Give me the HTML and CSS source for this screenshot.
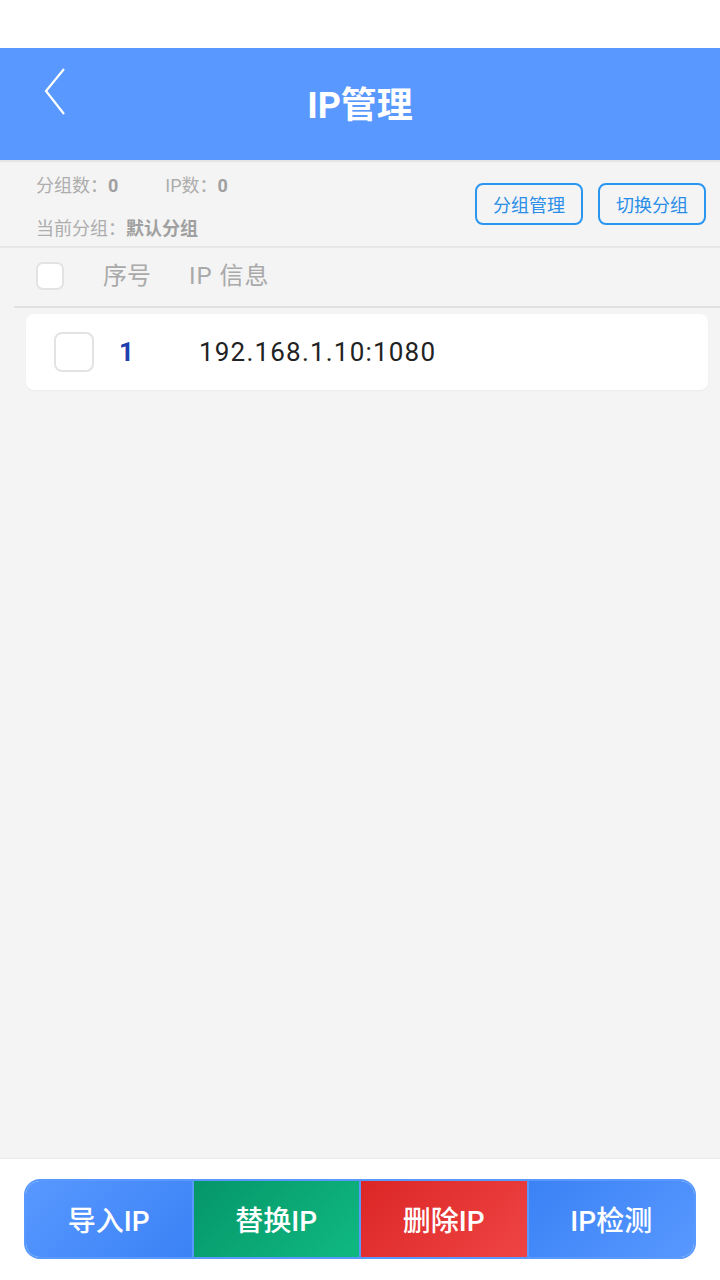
FILE: index.html
```html
<!DOCTYPE html>
<html lang="zh-CN">
<head>
  <meta charset="UTF-8" />
  <meta name="viewport" content="width=device-width, initial-scale=1.0"/>
  <title>IP管理</title>
  <link rel="stylesheet" href="styles.css">
</head>
<body>

<div class="app">
  <div class="status-bar"></div>

  <div class="header">
    <span class="back">
      <svg width="24" height="48" viewBox="0 0 24 48">
        <polyline points="21,1 3,23 21,46" fill="none" stroke="#fff" stroke-width="2.2"/>
      </svg>
    </span>
    <h1>IP管理</h1>
  </div>

  <div class="info">
    <div class="stats">
      <div class="stat-line">
        <span class="stat">分组数：<b>0</b></span>
        <span class="stat">IP数：<b>0</b></span>
      </div>
      <div class="stat-line">
        <span class="stat">当前分组：<b>默认分组</b></span>
      </div>
    </div>
    <div class="actions">
      <button class="outline-btn">分组管理</button>
      <button class="outline-btn">切换分组</button>
    </div>
  </div>

  <div class="list-head">
    <span class="check small"></span>
    <span class="col-no">序号</span>
    <span class="col-ip">IP 信息</span>
  </div>

  <div class="list">
    <div class="row">
      <span class="check"></span>
      <span class="row-no">1</span>
      <span class="row-ip">192.168.1.10:1080</span>
    </div>
  </div>

  <div class="footer">
    <div class="btn-group">
      <button class="seg seg-import">导入IP</button>
      <button class="seg seg-replace">替换IP</button>
      <button class="seg seg-delete">删除IP</button>
      <button class="seg seg-check">IP检测</button>
    </div>
  </div>
</div>

</body>
</html>
```

FILE: styles.css
```css
body {
  margin: 0;
  font-family: Roboto, "Noto Sans CJK SC", sans-serif;
  background: #f4f4f4;
}
.app {
  height: 1280px;
  display: flex;
  flex-direction: column;
}
.status-bar {
  height: 48px;
  background: #fff;
}
.header {
  height: 112px;
  background: #5898ff;
  display: flex;
  align-items: center;
  justify-content: center;
  position: relative;
  box-shadow: 0 2px 1px #e6e6e6;
}
.header .back {
  position: absolute;
  left: 43px;
  top: 20px;
}
.header h1 {
  margin: 0 0 4px 0;
  color: #fff;
  font-size: 36px;
  font-weight: bold;
}
.info {
  display: flex;
  justify-content: space-between;
  padding: 2px 14px 0 36px;
  height: 88px;
  box-sizing: border-box;
  border-bottom: 2px solid #e6e6e6;
}
.stat-line {
  height: 43px;
  display: flex;
  align-items: center;
  gap: 47px;
}
.stat {
  font-size: 18px;
  color: #adadad;
}
.stat b {
  color: #a0a0a0;
}
.actions {
  display: flex;
  gap: 15px;
  padding-top: 21px;
}
.outline-btn {
  width: 108px;
  height: 42px;
  border: 2px solid #2a96f0;
  border-radius: 8px;
  background: transparent;
  color: #2a8ee8;
  font-family: inherit;
  font-size: 18px;
  padding: 0;
}
.list-head {
  display: flex;
  align-items: center;
  height: 60px;
  box-sizing: border-box;
  margin-left: 14px;
  padding: 0 0 3px 22px;
  border-bottom: 2px solid #e2e2e2;
}
.check {
  display: block;
  width: 36px;
  height: 36px;
  border: 2px solid #e3e3e3;
  border-radius: 8px;
  background: #fff;
  flex: none;
}
.check.small {
  width: 24px;
  height: 24px;
  border-radius: 7px;
}
.col-no,
.col-ip {
  font-size: 24px;
  color: #a9a9a9;
  line-height: 1;
}
.col-no {
  margin-left: 39px;
}
.col-ip {
  margin-left: 38px;
  letter-spacing: 1px;
}
.list {
  flex: 1;
  padding: 6px 12px 0 26px;
}
.row {
  display: flex;
  align-items: center;
  height: 76px;
  background: #fff;
  border-radius: 8px;
  padding-left: 28px;
  box-shadow: 0 1px 2px rgba(0,0,0,0.04);
}
.row-no {
  width: 105px;
  padding-left: 25px;
  box-sizing: border-box;
  color: #1e40af;
  font-size: 26px;
  font-weight: bold;
}
.row-ip {
  color: #222;
  font-size: 26px;
  letter-spacing: 1.2px;
}
.footer {
  height: 122px;
  background: #fff;
  border-top: 1px solid #ebebeb;
  padding: 20px 24px 0 24px;
  box-sizing: border-box;
}
.btn-group {
  display: flex;
  height: 80px;
  border: 2px solid #5898ff;
  border-radius: 16px;
  overflow: hidden;
  box-sizing: border-box;
}
.seg {
  flex: 1;
  border: none;
  margin: 0;
  padding: 0;
  color: #fff;
  font-family: inherit;
  font-size: 28px;
  font-weight: 500;
}
.seg + .seg {
  border-left: 2px solid #5898ff;
}
.seg-import {
  background: linear-gradient(135deg, #5898ff, #3b82f6);
}
.seg-replace {
  background: linear-gradient(135deg, #059669, #10b981);
}
.seg-delete {
  background: linear-gradient(135deg, #dc2626, #ef4444);
}
.seg-check {
  background: linear-gradient(135deg, #3b82f6, #5898ff);
}
```
